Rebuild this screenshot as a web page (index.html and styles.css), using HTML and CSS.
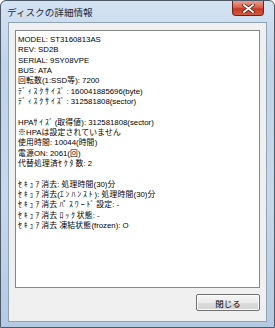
FILE: index.html
```html
<!DOCTYPE html>
<html lang="ja">
<head>
  <meta charset="UTF-8">
  <title>ディスクの詳細情報</title>
  <link rel="stylesheet" href="styles.css">
</head>
<body>
  <div class="window">
    <div class="titlebar">
      <span class="title">ディスクの詳細情報</span>
      <div class="close-btn">
        <svg width="13" height="9" viewBox="0 0 13 9">
          <path d="M2 1 L11 8 M11 1 L2 8" stroke="#5a1a12" stroke-width="3.4" stroke-linecap="square"/>
          <path d="M2 1 L11 8 M11 1 L2 8" stroke="#ffffff" stroke-width="1.8" stroke-linecap="square"/>
        </svg>
      </div>
    </div>

    <div class="client">
      <div class="info-box">
        <div>MODEL: ST3160813AS</div>
        <div>REV: SD2B</div>
        <div>SERIAL: 9SY08VPE</div>
        <div>BUS: ATA</div>
        <div><span class="fw">回転数</span>(1:SSD<span class="fw">等</span>): 7200</div>
        <div><span class="hw">ﾃﾞｨｽｸｻｲｽﾞ</span>: 160041885696(byte)</div>
        <div><span class="hw">ﾃﾞｨｽｸｻｲｽﾞ</span>: 312581808(sector)</div>
        <div class="blank"></div>
        <div>HPA<span class="hw">ｻｲｽﾞ</span>(<span class="fw">取得値</span>): 312581808(sector)</div>
        <div><span class="fw">※</span>HPA<span class="fw">は設定されていません</span></div>
        <div><span class="fw">使用時間</span>: 10044(<span class="fw">時間</span>)</div>
        <div><span class="fw">電源</span>ON: 2061(<span class="fw">回</span>)</div>
        <div><span class="fw">代替処理済</span><span class="hw">ｾｸﾀ</span><span class="fw">数</span>: 2</div>
        <div class="blank"></div>
        <div><span class="hw">ｾｷｭｱ</span><span class="fw">消去</span>: <span class="fw">処理時間</span>(30)<span class="fw">分</span></div>
        <div><span class="hw">ｾｷｭｱ</span><span class="fw">消去</span>(<span class="hw">ｴﾝﾊﾝｽﾄ</span>): <span class="fw">処理時間</span>(30)<span class="fw">分</span></div>
        <div><span class="hw">ｾｷｭｱ</span><span class="fw">消去</span> <span class="hw">ﾊﾟｽﾜｰﾄﾞ</span><span class="fw">設定</span>: -</div>
        <div><span class="hw">ｾｷｭｱ</span><span class="fw">消去</span> <span class="hw">ﾛｯｸ</span><span class="fw">状態</span>: -</div>
        <div><span class="hw">ｾｷｭｱ</span><span class="fw">消去</span> <span class="fw">凍結状態</span>(frozen): O</div>
      </div>
      <div class="actions">
        <button class="close-button">閉じる</button>
      </div>
    </div>
  </div>
</body>
</html>
```

FILE: styles.css
```css
body {
  margin: 0;
  background: #ffffff;
  font-family: "Liberation Sans", "Noto Sans CJK JP", sans-serif;
}
.window {
  box-sizing: border-box;
  width: 275px;
  height: 328px;
  display: flex;
  flex-direction: column;
  border: 1px solid #4f5a68;
  border-radius: 6px 6px 0 0;
  background: linear-gradient(180deg, #d4e3f2 0%, #bfd3e9 20%, #c6d8ec 60%, #b4cae3 100%);
}
.titlebar {
  height: 21px;
  display: flex;
  justify-content: space-between;
  align-items: flex-start;
  padding: 0 10px 0 6px;
}
.title {
  font-size: 9.6px;
  color: #1e2a38;
  line-height: 24px;
}
.close-btn {
  width: 32px;
  height: 15px;
  box-sizing: border-box;
  display: flex;
  align-items: center;
  justify-content: center;
  border: 1px solid #6e2219;
  border-top: none;
  border-radius: 0 0 4px 4px;
  background: linear-gradient(180deg, #eaa08f 0%, #d8634c 45%, #c43a22 55%, #d45a42 100%);
}
.client {
  flex: 1;
  margin: 0 7px 6px 7px;
  border: 1px solid #8fa2b8;
  background: #f0f0f0;
  padding: 7px 6px 10px 6px;
  display: flex;
  flex-direction: column;
}
.info-box {
  height: 258px;
  box-sizing: border-box;
  background: #ffffff;
  border: 1px solid #828790;
  padding: 4px 2px;
  font-size: 7.8px;
  line-height: 10.33px;
  color: #000000;
  white-space: nowrap;
  overflow: hidden;
}
.hw {
  letter-spacing: 1.9px;
}
.fw {
  letter-spacing: 0.2px;
}
.blank {
  height: 10.33px;
}
.actions {
  display: flex;
  justify-content: flex-end;
  margin-top: 6px;
}
.close-button {
  width: 64px;
  height: 17px;
  padding: 0;
  font-family: "Liberation Sans", "Noto Sans CJK JP", sans-serif;
  font-size: 8.5px;
  color: #000000;
  border: 1px solid #707070;
  border-radius: 2px;
  background: linear-gradient(180deg, #f6f6f6 0%, #ebebeb 50%, #dddddd 51%, #d3d3d3 100%);
  box-shadow: inset 0 0 0 1px #fcfcfc;
}
```
